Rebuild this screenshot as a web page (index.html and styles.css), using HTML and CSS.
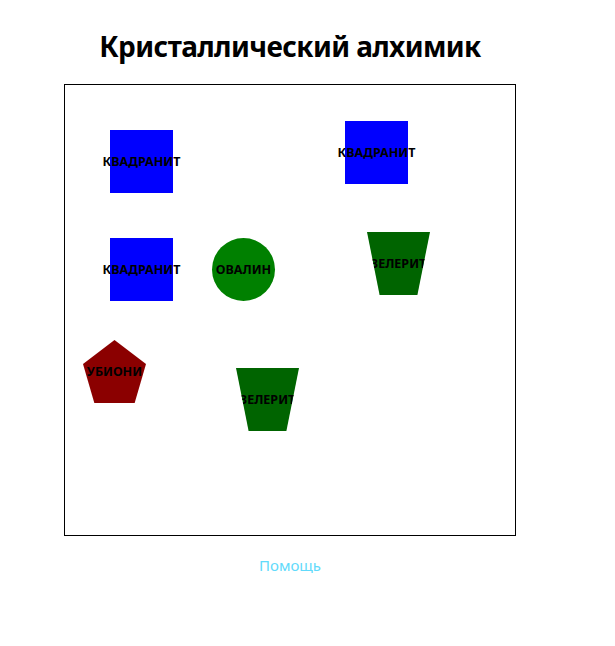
FILE: index.html
```html
<!DOCTYPE html>
<html lang="ru">
<head>
<meta charset="utf-8">
<title>Кристаллический алхимик</title>
<link rel="stylesheet" href="styles.css">
</head>
<body>
<div class="app">
  <h1 class="title">Кристаллический алхимик</h1>
  <div class="board">
    <div class="crystal square" style="left:45px;top:45px"><span>КВАДРАНИТ</span></div>
    <div class="crystal square" style="left:280px;top:36px"><span>КВАДРАНИТ</span></div>
    <div class="crystal square" style="left:45px;top:153px"><span>КВАДРАНИТ</span></div>
    <div class="crystal circle" style="left:147px;top:153px"><span>ОВАЛИН</span></div>
    <div class="crystal trapezoid" style="left:302px;top:147px"><span>ЗЕЛЕРИТ</span></div>
    <div class="crystal pentagon" style="left:18px;top:255px"><span>УБИОНИ</span></div>
    <div class="crystal trapezoid" style="left:171px;top:283px"><span>ЗЕЛЕРИТ</span></div>
  </div>
  <a class="help" href="#">Помощь</a>
</div>
</body>
</html>
```
FILE: styles.css
```css
html, body {
  margin: 0;
  padding: 0;
  background: #fff;
}
body {
  font-family: "Noto Sans", "Open Sans", sans-serif;
}
.app {
  width: 580px;
  display: flex;
  flex-direction: column;
  align-items: center;
}
.title {
  margin: 27px 0 0;
  font-size: 28px;
  line-height: 38px;
  font-weight: 700;
  letter-spacing: -0.6px;
  color: #000;
}
.board {
  position: relative;
  margin-top: 19px;
  width: 450px;
  height: 450px;
  border: 1px solid #000;
}
.crystal {
  position: absolute;
  width: 63px;
  height: 63px;
  display: flex;
  align-items: center;
  justify-content: center;
}
.crystal span {
  font-size: 12.5px;
  font-weight: 700;
  color: #000;
  white-space: nowrap;
}
.square {
  background: #0000ff;
}
.circle {
  background: #008000;
  border-radius: 50%;
}
.trapezoid {
  background: #006400;
  clip-path: polygon(0 0, 100% 0, 80% 100%, 20% 100%);
}
.pentagon {
  background: #8b0000;
  clip-path: polygon(50% 0, 100% 38%, 82% 100%, 18% 100%, 0 38%);
}
.help {
  margin-top: 18px;
  font-size: 15px;
  line-height: 22px;
  color: #61dafb;
  text-decoration: none;
}
```
